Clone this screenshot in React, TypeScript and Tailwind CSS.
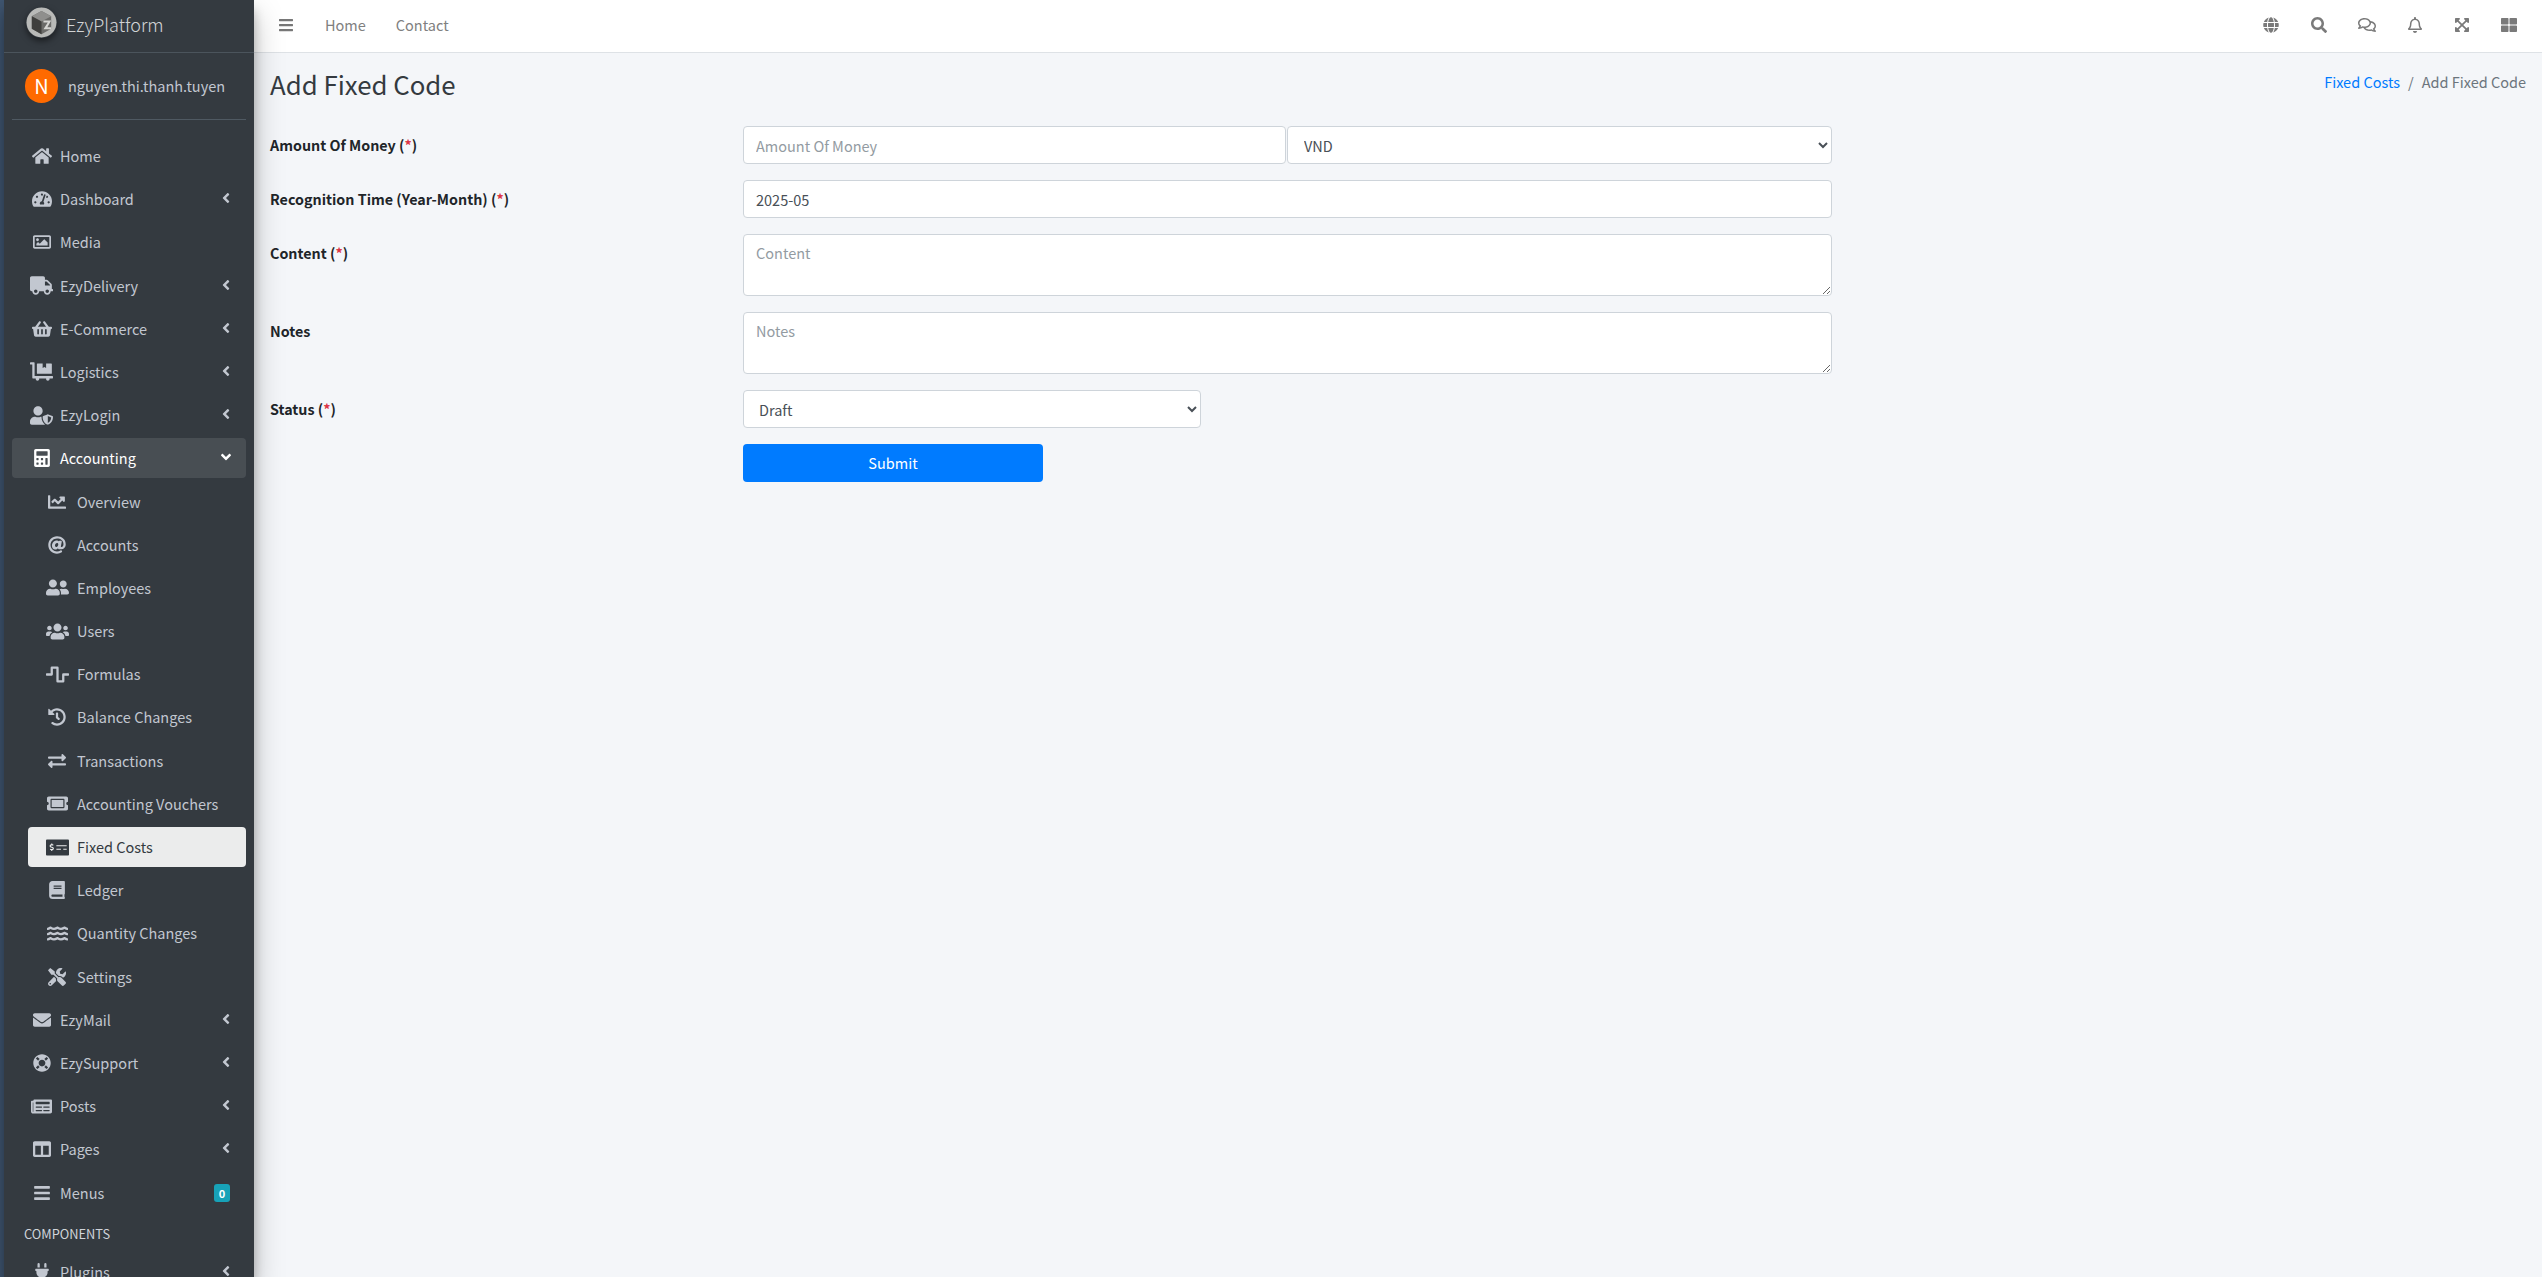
import {
  FaAngleDown,
  FaAngleLeft,
  FaAt,
  FaBars,
  FaBook,
  FaCalculator,
  FaChartLine,
  FaColumns,
  FaDollyFlatbed,
  FaEnvelope,
  FaExchangeAlt,
  FaExpandArrowsAlt,
  FaGlobe,
  FaHistory,
  FaHome,
  FaLifeRing,
  FaMoneyCheckAlt,
  FaNewspaper,
  FaPlug,
  FaRegBell,
  FaRegComments,
  FaRegImage,
  FaSearch,
  FaShoppingBasket,
  FaTachometerAlt,
  FaThLarge,
  FaTicketAlt,
  FaTools,
  FaTruck,
  FaUserFriends,
  FaUserShield,
  FaUsers,
  FaWater,
  FaWaveSquare,
} from "react-icons/fa";
import type { IconType } from "react-icons";

const font = "font-['Noto_Sans_CJK_SC','Noto_Sans',sans-serif]";

function NavItem({
  icon: Icon,
  size,
  label,
  arrow,
  badge,
}: {
  icon: IconType;
  size: number;
  label: string;
  arrow?: boolean;
  badge?: string;
}) {
  return (
    <div className="flex items-center h-[40px] mb-[3.2px] mx-2 pl-[16px] pr-[12px] text-[#c2c7d0] shrink-0">
      <span className="w-[28px] flex justify-center mr-[5px] -ml-[0.5px]">
        <Icon size={size} />
      </span>
      <span className="text-[14.5px] leading-[24px] -ml-[0.5px]">{label}</span>
      {arrow && <FaAngleLeft className="ml-auto text-[16px] -translate-y-[1px]" />}
      {badge && (
        <span className="ml-auto mr-[4px] bg-[#17a2b8] text-white font-bold text-[11px] leading-[18px] w-[16px] h-[18px] text-center rounded-[3px]">
          {badge}
        </span>
      )}
    </div>
  );
}

function SubItem({
  icon: Icon,
  size,
  label,
  active,
}: {
  icon: IconType;
  size: number;
  label: string;
  active?: boolean;
}) {
  return (
    <div
      className={`flex items-center h-[40px] mb-[3.2px] ml-[24px] mr-2 pl-[17px] rounded-[4px] shrink-0 ${
        active ? "bg-[#ebecec] text-[#343a40]" : "text-[#c2c7d0]"
      }`}
    >
      <span className="w-[24px] flex justify-center mr-[8px]">
        <Icon size={size} />
      </span>
      <span className="text-[14.5px] leading-[24px]">{label}</span>
    </div>
  );
}

function Sidebar() {
  return (
    <aside className="w-[250px] h-full bg-[#343a40] overflow-hidden flex flex-col shrink-0 shadow-[0_14px_28px_rgba(0,0,0,0.25),0_10px_10px_rgba(0,0,0,0.22)] relative z-10">
      {/* Brand */}
      <div className="h-[53px] flex items-center border-b border-[#4b545c] shrink-0 pl-[22px]">
        <svg width="31" height="31" viewBox="0 0 32 32" className="rounded-full shadow-[0_3px_6px_rgba(0,0,0,0.5)] -mt-[7px]">
          <circle cx="16" cy="16" r="15.5" fill="#b9bab8" />
          <path d="M16 4 26 9.500v13L16 28 6 22.500v-13z" fill="#6b6b69" />
          <path d="M16 4 26 9.500 16 15 6 9.500z" fill="#8f8f8d" />
          <path d="M6 9.500 16 15v13L6 22.500z" fill="#3f3f3d" />
          <path d="M18 14h8l-4 7h4v2h-8l4.500-7H18z" fill="#d5d5d3" />
        </svg>
        <span className="ml-[9px] text-[18px] font-light leading-[30px] text-[rgba(255,255,255,0.8)] -mt-[5px]">EzyPlatform</span>
      </div>

      {/* User */}
      <div className="mx-2 mt-[16px] pb-[16px] mb-[16px] border-b border-[#4f5962] flex items-center pl-[13px] shrink-0">
        <div className="w-[33px] h-[34px] rounded-full bg-[#ff6a00] text-white flex items-center justify-center text-[20px]">
          N
        </div>
        <span className="ml-[10px] text-[14.5px] leading-[24px] text-[#c2c7d0]">nguyen.thi.thanh.tuyen</span>
      </div>

      {/* Nav */}
      <nav className="flex flex-col">
        <NavItem icon={FaHome} size={20} label="Home" />
        <NavItem icon={FaTachometerAlt} size={20} label="Dashboard" arrow />
        <NavItem icon={FaRegImage} size={18} label="Media" />
        <NavItem icon={FaTruck} size={23} label="EzyDelivery" arrow />
        <NavItem icon={FaShoppingBasket} size={20} label="E-Commerce" arrow />
        <NavItem icon={FaDollyFlatbed} size={23} label="Logistics" arrow />
        <NavItem icon={FaUserShield} size={23} label="EzyLogin" arrow />
        <div className="flex items-center h-[40px] mb-[3.2px] mx-2 pl-[16px] pr-[12px] rounded-[4px] bg-[rgba(255,255,255,0.1)] text-white shrink-0">
          <span className="w-[28px] flex justify-center mr-[5px] -ml-[0.5px]">
            <FaCalculator size={18} />
          </span>
          <span className="text-[14.5px] leading-[24px] -ml-[0.5px]">Accounting</span>
          <FaAngleDown className="ml-auto text-[16px] -translate-y-[1px]" />
        </div>
        <SubItem icon={FaChartLine} size={18} label="Overview" />
        <SubItem icon={FaAt} size={18} label="Accounts" />
        <SubItem icon={FaUserFriends} size={23} label="Employees" />
        <SubItem icon={FaUsers} size={23} label="Users" />
        <SubItem icon={FaWaveSquare} size={23} label="Formulas" />
        <SubItem icon={FaHistory} size={18} label="Balance Changes" />
        <SubItem icon={FaExchangeAlt} size={18} label="Transactions" />
        <SubItem icon={FaTicketAlt} size={21} label="Accounting Vouchers" />
        <SubItem icon={FaMoneyCheckAlt} size={23} label="Fixed Costs" active />
        <SubItem icon={FaBook} size={18} label="Ledger" />
        <SubItem icon={FaWater} size={21} label="Quantity Changes" />
        <SubItem icon={FaTools} size={18} label="Settings" />
        <NavItem icon={FaEnvelope} size={18} label="EzyMail" arrow />
        <NavItem icon={FaLifeRing} size={18} label="EzySupport" arrow />
        <NavItem icon={FaNewspaper} size={21} label="Posts" arrow />
        <NavItem icon={FaColumns} size={18} label="Pages" arrow />
        <NavItem icon={FaBars} size={18} label="Menus" badge="0" />
        <div className="ml-[20px] h-[36px] flex items-center text-[12.8px] text-[#d0d4db] shrink-0">COMPONENTS</div>
        <NavItem icon={FaPlug} size={18} label="Plugins" arrow />
      </nav>
    </aside>
  );
}

function Header() {
  const iconClass = "text-[#7a7a7a]";
  const slot = "w-[48px] flex justify-center";
  return (
    <header className="h-[53px] bg-white border-b border-[#dee2e6] flex items-center shrink-0 pl-[24px] pr-[9px]">
      <FaBars size={16} className="text-[#777] -mt-[3px]" />
      <span className="ml-[31px] text-[14.5px] text-[#808080] -mt-[3px]">Home</span>
      <span className="ml-[30px] text-[14.5px] text-[#808080] -mt-[3px]">Contact</span>
      <div className="ml-auto flex items-center -mt-[3px]">
        <span className={slot}>
          <FaGlobe size={16} className={iconClass} />
        </span>
        <span className={slot}>
          <FaSearch size={16} className={iconClass} />
        </span>
        <span className={slot}>
          <FaRegComments size={18} className={iconClass} />
        </span>
        <span className={slot}>
          <FaRegBell size={16} className={iconClass} />
        </span>
        <span className="w-[46px] flex justify-center">
          <FaExpandArrowsAlt size={16} className={iconClass} />
        </span>
        <span className={slot}>
          <FaThLarge size={16} className={iconClass} />
        </span>
      </div>
    </header>
  );
}

function Req() {
  return (
    <>
      (<span className="text-[#dc3545]">*</span>)
    </>
  );
}

const inputClass =
  "bg-white border border-[#ced4da] rounded-[4px] h-[38px] px-[12px] text-[14.5px] text-[#495057] placeholder:text-[#939ba2] outline-none";

function Label({ children }: { children: React.ReactNode }) {
  return <label className="w-[473px] shrink-0 pt-[7px] text-[14.3px] leading-[24px] font-bold text-[#212529]">{children}</label>;
}

function Form() {
  return (
    <form className="flex flex-col gap-[16px] w-[1562px]">
      <div className="flex">
        <Label>
          Amount Of Money <Req />
        </Label>
        <div className="flex w-[1089px]">
          <input placeholder="Amount Of Money" className={`${inputClass} w-[543px] mr-[1px]`} />
          <select className={`${inputClass} flex-1 appearance-auto`} defaultValue="VND">
            <option>VND</option>
          </select>
        </div>
      </div>
      <div className="flex">
        <Label>
          Recognition Time (Year-Month) <Req />
        </Label>
        <input defaultValue="2025-05" className={`${inputClass} w-[1089px]`} />
      </div>
      <div className="flex">
        <Label>
          Content <Req />
        </Label>
        <textarea placeholder="Content" className={`${inputClass} w-[1089px] h-[62px] py-[6px] leading-[24px]`} />
      </div>
      <div className="flex">
        <Label>Notes</Label>
        <textarea placeholder="Notes" className={`${inputClass} w-[1089px] h-[62px] py-[6px] leading-[24px]`} />
      </div>
      <div className="flex">
        <Label>
          Status <Req />
        </Label>
        <select className={`${inputClass} w-[458px] pl-[11px]`} defaultValue="Draft">
          <option>Draft</option>
        </select>
      </div>
      <div className="flex">
        <div className="w-[473px] shrink-0" />
        <button type="button" className="w-[300px] h-[38px] bg-[#007bff] text-white text-[14.5px] rounded-[4px]">
          Submit
        </button>
      </div>
    </form>
  );
}

export default function App() {
  return (
    <div className={`${font} flex h-screen w-full overflow-hidden bg-[#f4f6f9]`}>
      <div className="w-[4px] h-full bg-[#3f5570] shrink-0" />
      <Sidebar />
      <div className="flex-1 min-w-0 flex flex-col">
        <Header />
        <main className="flex-1 px-[16px]">
          <div className="flex items-center justify-between h-[73px] pb-[8px]">
            <h1 className="text-[25.8px] leading-[34px] text-[#343a40] font-normal -mt-[4px]">Add Fixed Code</h1>
            <div className="text-[14.5px] leading-[24px] text-[#6c757d] -mt-[8px]">
              <span className="text-[#007bff]">Fixed Costs</span>
              <span className="mx-[8px]">/</span>
              <span>Add Fixed Code</span>
            </div>
          </div>
          <Form />
        </main>
      </div>
    </div>
  );
}
